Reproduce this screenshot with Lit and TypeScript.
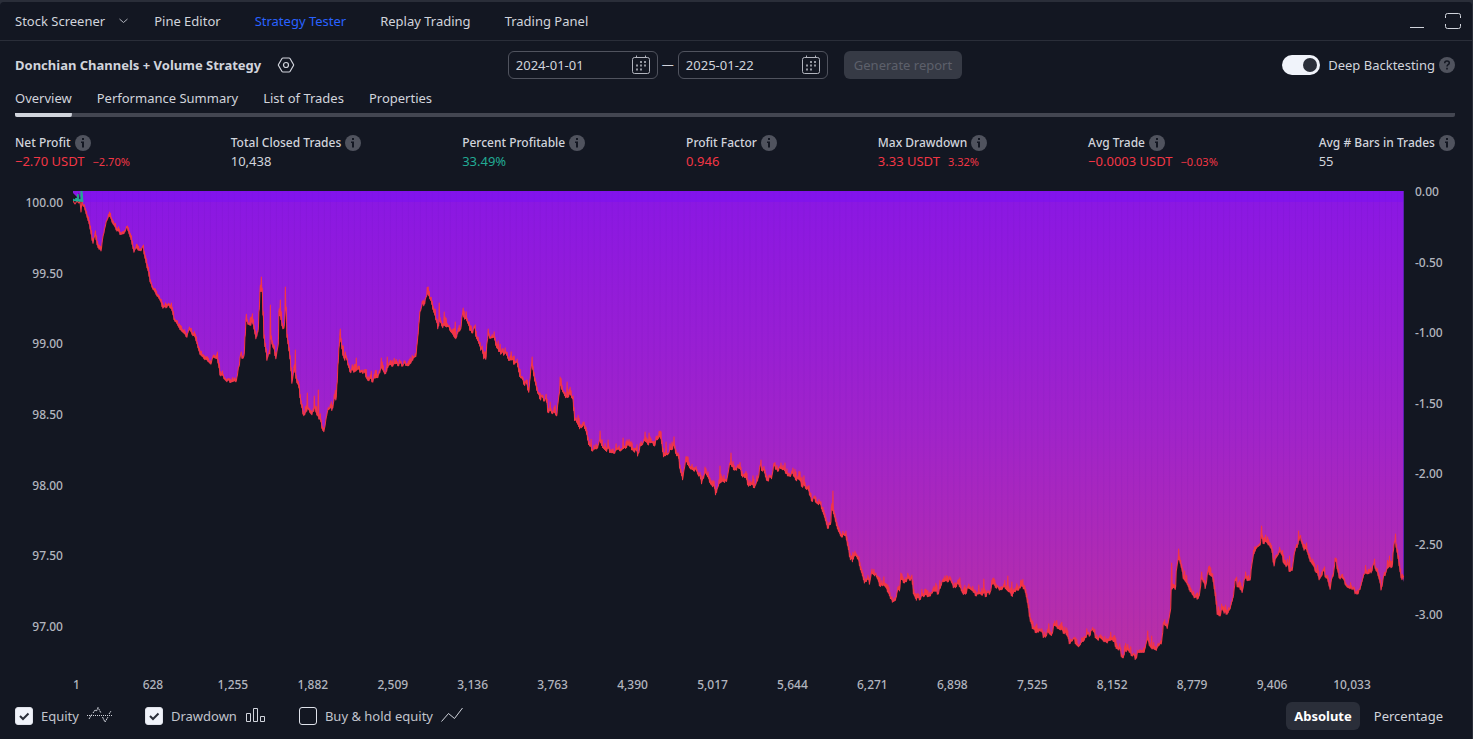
import { LitElement, html, svg, css } from "lit";
import { customElement, state } from "lit/decorators.js";

const LOWS: number[][] = [
  [83, 205], [86, 215], [89, 225], [92, 240], [93, 243], [95, 235], [97, 245], [101, 252], [103, 238], [106, 222],
  [109, 216], [112, 222], [116, 229], [120, 234], [124, 234], [127, 229], [131, 240], [134, 253], [136, 248], [141, 251],
  [143, 249], [146, 262], [150, 283], [154, 291], [160, 302], [164, 309], [168, 306], [171, 308], [174, 320], [180, 331],
  [187, 337], [189, 330], [195, 339], [200, 355], [211, 364], [213, 358], [217, 360], [220, 374], [228, 382], [236, 382],
  [239, 368], [241, 358], [244, 359], [246, 322], [248, 325], [252, 326], [254, 330], [256, 340], [258, 335], [260, 295],
  [262, 293], [264, 340], [267, 365], [270, 355], [271, 340], [274, 350], [276, 363], [278, 350], [279, 315], [281, 323],
  [284, 332], [286, 313], [287, 340], [290, 361], [292, 385], [294, 372], [297, 385], [299, 392], [303, 417], [307, 412],
  [312, 418], [315, 408], [320, 423], [324, 432], [328, 413], [332, 410], [336, 400], [337, 385], [339, 352], [340, 335],
  [343, 355], [346, 362], [349, 370], [354, 375], [358, 372], [362, 372], [367, 380], [373, 383], [378, 381], [381, 370],
  [385, 378], [390, 367], [398, 366], [410, 366], [416, 361], [418, 340], [420, 315], [424, 305], [428, 297], [431, 302],
  [434, 317], [438, 328], [440, 322], [443, 327], [450, 330], [456, 338], [461, 328], [463, 316], [466, 323], [470, 332],
  [475, 333], [480, 345], [484, 362], [486, 360], [487, 345], [489, 338], [493, 338], [498, 351], [501, 359], [505, 354],
  [510, 365], [517, 363], [520, 378], [526, 386], [529, 393], [531, 372], [532, 364], [535, 380], [538, 396], [543, 402],
  [546, 402], [548, 412], [553, 415], [557, 418], [559, 402], [561, 388], [565, 398], [569, 396], [573, 400], [575, 420],
  [580, 432], [584, 427], [588, 441], [590, 450], [597, 453], [600, 441], [604, 449], [608, 453], [615, 453], [622, 454],
  [627, 449], [633, 450], [638, 455], [641, 446], [645, 441], [650, 445], [655, 447], [660, 440], [662, 443], [664, 459],
  [669, 453], [674, 450], [679, 463], [683, 480], [686, 464], [691, 470], [696, 472], [700, 480], [702, 486], [705, 473],
  [709, 480], [713, 487], [716, 495], [720, 486], [724, 483], [727, 485], [730, 468], [735, 470], [738, 471], [742, 475],
  [749, 486], [755, 488], [758, 480], [761, 469], [764, 471], [767, 481], [772, 482], [774, 471], [780, 470], [786, 476],
  [793, 478], [799, 483], [803, 487], [807, 492], [812, 500], [816, 502], [822, 508], [825, 517], [828, 528], [831, 528],
  [832, 507], [835, 517], [838, 530], [841, 538], [844, 538], [846, 540], [849, 553], [853, 566], [856, 557], [859, 561],
  [862, 573], [865, 583], [870, 584], [872, 573], [876, 578], [879, 585], [885, 589], [890, 595], [893, 604], [895, 603],
  [897, 596], [900, 592], [901, 582], [905, 583], [912, 583], [914, 595], [917, 601], [920, 600], [925, 597], [930, 596],
  [935, 595], [941, 593], [943, 585], [950, 583], [954, 590], [957, 587], [962, 592], [964, 596], [968, 592], [973, 595],
  [978, 596], [984, 597], [990, 595], [994, 584], [1000, 591], [1005, 589], [1010, 594], [1014, 598], [1018, 591],
  [1025, 591], [1027, 600], [1030, 617], [1033, 632], [1037, 633], [1041, 634], [1044, 639], [1047, 635], [1051, 638],
  [1055, 629], [1060, 630], [1066, 634], [1070, 644], [1075, 642], [1079, 647], [1085, 640], [1090, 637], [1093, 634],
  [1100, 641], [1107, 647], [1109, 643], [1115, 643], [1118, 650], [1124, 659], [1126, 653], [1130, 656], [1136, 660],
  [1139, 656], [1145, 655], [1148, 641], [1151, 646], [1157, 652], [1162, 644], [1164, 628], [1168, 628], [1171, 611],
  [1172, 590], [1176, 590], [1177, 572], [1179, 561], [1181, 568], [1184, 580], [1188, 586], [1191, 592], [1195, 601],
  [1200, 597], [1202, 583], [1206, 588], [1209, 574], [1213, 577], [1216, 598], [1218, 615], [1221, 616], [1224, 611],
  [1227, 618], [1231, 612], [1234, 602], [1236, 585], [1239, 587], [1243, 597], [1245, 582], [1251, 580], [1254, 560],
  [1258, 550], [1261, 548], [1262, 536], [1264, 545], [1268, 546], [1272, 553], [1275, 565], [1281, 556], [1285, 563],
  [1290, 572], [1293, 573], [1295, 558], [1299, 545], [1301, 538], [1305, 550], [1308, 552], [1312, 564], [1317, 572],
  [1320, 581], [1324, 575], [1328, 580], [1331, 590], [1334, 578], [1336, 563], [1340, 577], [1347, 587], [1352, 590],
  [1355, 595], [1361, 592], [1365, 577], [1370, 577], [1375, 567], [1378, 575], [1382, 591], [1385, 580], [1388, 570],
  [1393, 566], [1396, 541], [1399, 560], [1402, 578], [1404, 582],
];

const SPIKES: Record<number, number> = {
  109: 212, 127: 226, 143: 245, 171: 303, 189: 327, 217: 352, 251: 317, 261: 277, 270: 305, 280: 300, 285: 287, 295: 350,
  307: 393, 314: 396, 318: 390, 340: 329, 356: 358, 381: 358, 387: 357, 428: 287, 439: 303, 444: 312, 455: 322, 463: 308,
  488: 329, 503: 349, 514: 356, 532: 357, 550: 402, 560: 377, 567: 382, 583: 422, 600: 431, 623: 438, 645: 432, 649: 433,
  660: 431, 666: 442, 672: 442, 688: 457, 705: 467, 720: 466, 731: 453, 761: 460, 785: 463, 793: 468, 802: 477, 833: 491,
  846: 531, 855: 551, 872: 569, 901: 573, 951: 578, 961: 585, 979: 585, 984: 579, 994: 578, 1008: 576, 1012: 582,
  1021: 580, 1037: 624, 1055: 621, 1092: 630, 1125: 646, 1148: 631, 1152: 636, 1172: 563, 1179: 549, 1185: 571,
  1202: 572, 1210: 566, 1222: 604, 1237: 577, 1246: 572, 1262: 526, 1268: 537, 1281: 550, 1290: 556, 1299: 531,
  1307: 543, 1322: 572, 1336: 558, 1365: 574, 1375: 559, 1390: 556, 1396: 534,
};

const X0 = 73, X1 = 1405, Y0 = 191, Y1 = 669;

function buildEquity() {
  let seed = 7;
  const rand = () => {
    seed = (seed * 16807) % 2147483647;
    return seed / 2147483647;
  };
  const line: string[] = [];
  const lows: string[] = [];
  let k = 0;
  let dip = 0;
  for (let x = LOWS[0][0]; x <= 1404; x++) {
    while (k < LOWS.length - 2 && LOWS[k + 1][0] <= x) k++;
    const [ax, ay] = LOWS[k];
    const [bx, by] = LOWS[k + 1];
    const slope = Math.abs((by - ay) / (bx - ax));
    if (x % 2 === 0) dip = rand() * (x < 240 ? 3 : 6);
    const low = ay + ((by - ay) * (x - ax)) / (bx - ax) - dip + 1;
    const swing = x < 240 ? 1 + rand() * 3 : slope > 3 ? 3 : 1 + rand() * rand() * 9;
    const top = SPIKES[x] ?? low - swing;
    line.push(`${x} ${low.toFixed(1)}`, `${x}.5 ${top.toFixed(1)}`);
    lows.push(`${x} ${low.toFixed(1)}`);
  }
  return {
    line: "M73 201L75 204L77 201L79 203L80 201L81 212L82 200L" + line.join("L"),
    area: `M${X0} ${Y0}V193L77 197L79 193L80 199L81 196L82 200L` + lows.join("L") + `L${X1} 582V${Y0}Z`,
  };
}
const EQUITY = buildEquity();

const info = html`<svg class="hint" viewBox="0 0 16 16" role="img" aria-label="Info">
  <circle cx="8" cy="8" r="8" fill="#50535e" />
  <path d="M7 3h2v2H7zM6 6.500h3v6H7V8H6z" fill="#131722" />
</svg>`;

const calendar = html`<svg class="cal" viewBox="0 0 20 20" fill="none" stroke="#b2b5be">
  <path d="M5.500 .5v2M14.500 .5v2" />
  <rect x="1.500" y="2.500" width="17" height="16" rx="2" />
  <path d="M9 7h2M13 7h2M5 10.500h2M9 10.500h2M13 10.500h2M5 14.500h2M9 14.500h2" stroke-width="2" stroke="#9598a1" />
</svg>`;

interface Stat { label: string; value: string; pct?: string; tone: string }
const STATS: Stat[] = [
  { label: "Net Profit", value: "−2.70 USDT", pct: "−2.70%", tone: "neg" },
  { label: "Total Closed Trades", value: "10,438", tone: "" },
  { label: "Percent Profitable", value: "33.49%", tone: "pos" },
  { label: "Profit Factor", value: "0.946", tone: "neg" },
  { label: "Max Drawdown", value: "3.33 USDT", pct: "3.32%", tone: "neg" },
  { label: "Avg Trade", value: "−0.0003 USDT", pct: "−0.03%", tone: "neg" },
  { label: "Avg # Bars in Trades", value: "55", tone: "" },
];

@customElement("equity-chart")
export class EquityChart extends LitElement {
  static styles = css`
    :host {
      display: grid;
      grid-template-columns: 73px minmax(0, 1fr) 68px;
      grid-template-rows: minmax(0, 1fr) auto;
      row-gap: 8px;
      font-size: 12px;
      line-height: 16px;
      font-weight: 500;
      color: #b2b5be;
    }
    .axis { display: flex; flex-direction: column; justify-content: space-between; }
    .left { align-items: flex-end; padding: 4px 10px 34px 0; }
    .right { margin-top: -7px; padding: 0 0 46px 11px; }
    svg { display: block; width: 100%; height: 100%; }
    .trades { grid-column: 1 / -1; display: flex; padding: 0 80px 0 73px; }
    .trades span { flex: 2 1 0; text-align: center; }
    .trades span:first-child { flex-grow: 1; text-align: left; }
  `;

  render() {
    return html`
      <div class="axis left">
        ${["100.00", "99.50", "99.00", "98.50", "98.00", "97.50", "97.00"].map((t) => html`<span>${t}</span>`)}
      </div>
      <svg viewBox="${X0} ${Y0} ${X1 - X0} ${Y1 - Y0}" preserveAspectRatio="none" role="img" aria-label="Equity and drawdown">
        ${svg`
          <defs>
            <linearGradient id="dd" gradientUnits="userSpaceOnUse" x1="0" y1="191" x2="0" y2="660">
              <stop offset="0" stop-color="#8a17e4" />
              <stop offset=".5" stop-color="#a023ca" />
              <stop offset="1" stop-color="#ba30a4" />
            </linearGradient>
            <pattern id="bars" patternUnits="userSpaceOnUse" width="6" height="700">
              <rect width="1" height="700" fill="#50109a" opacity=".08" />
            </pattern>
          </defs>
          <path d=${EQUITY.area} fill="url(#dd)" />
          <path d=${EQUITY.area} fill="url(#bars)" />
          <rect x="82" y="191" width="1323" height="11" fill="#7a10f4" opacity=".5" />
          <path d="M1404.5 191V578" stroke="#5a20b0" />
          <path d=${EQUITY.line} fill="none" stroke="#f23645" stroke-width="1.1" stroke-linejoin="round" />
          <path d="M73 201V199L75 200L76 198L77 199L78 194L79 200L81 199V191L82 191L83 202" fill="#22ab94" stroke="#22ab94" />
        `}
      </svg>
      <div class="axis right">
        ${["0.00", "-0.50", "-1.00", "-1.50", "-2.00", "-2.50", "-3.00"].map((t) => html`<span>${t}</span>`)}
      </div>
      <div class="trades">
        ${["1", "628", "1,255", "1,882", "2,509", "3,136", "3,763", "4,390", "5,017", "5,644", "6,271", "6,898", "7,525",
          "8,152", "8,779", "9,406", "10,033"].map((t) => html`<span>${t}</span>`)}
      </div>
    `;
  }
}

@customElement("app-root")
export class AppRoot extends LitElement {
  @state() private unit = "Absolute";

  static styles = css`
    :host {
      display: flex;
      flex-direction: column;
      box-sizing: border-box;
      height: 100vh;
      padding-top: 2px;
      background: #2a2e39;
      color: #d1d4dc;
      font: 13px/20px "Trebuchet MS", "Noto Sans", sans-serif;
    }
    * { box-sizing: border-box; }
    button { border: 0; padding: 0; background: none; color: inherit; font: inherit; cursor: pointer; }
    svg { flex: none; display: block; }
    .panel {
      flex: 1;
      min-height: 0;
      display: flex;
      flex-direction: column;
      background: #131722;
      border-right: 1px solid #2a2e39;
      border-radius: 4px 4px 0 0;
    }
    .header {
      display: flex;
      align-items: center;
      gap: 34px;
      height: 39px;
      padding: 0 11px 0 15px;
      border-bottom: 1px solid #2a2e39;
    }
    .menu { display: flex; align-items: center; gap: 14px; margin-right: -8px; }
    .chosen { color: #2962ff; }
    .window { display: flex; gap: 20px; margin-left: auto; }
    .toolbar {
      display: grid;
      grid-template-columns: 1fr auto 1fr;
      align-items: center;
      padding: 10px 17px 0 15px;
    }
    .title { display: flex; align-items: center; gap: 16px; }
    h1 { margin: 0; font-size: 13px; font-weight: 700; }
    .range { display: flex; align-items: center; gap: 4px; }
    .date {
      display: flex;
      align-items: center;
      width: 150px;
      height: 28px;
      padding: 0 6px 0 7px;
      border: 1px solid #50535e;
      border-radius: 6px;
    }
    .date input {
      flex: 1;
      min-width: 0;
      border: 0;
      padding: 0;
      outline: 0;
      background: none;
      color: inherit;
      font: inherit;
    }
    .cal { width: 20px; height: 20px; }
    .dash { font-size: 12px; }
    .generate {
      height: 28px;
      margin-left: 12px;
      padding: 0 10px;
      border-radius: 6px;
      background: #363a45;
      color: #5d606b;
    }
    .deep { display: flex; align-items: center; justify-content: flex-end; gap: 4px; }
    .deep label { display: flex; align-items: center; gap: 8px; }
    .switch {
      appearance: none;
      width: 38px;
      height: 20px;
      margin: 0;
      padding: 3px;
      border-radius: 10px;
      background: #f0f3fa;
      display: flex;
    }
    .switch::before { content: ""; width: 14px; height: 14px; border-radius: 7px; background: #2a2e39; }
    .switch:checked { justify-content: flex-end; }
    .hint { width: 16px; height: 16px; }
    .tabs {
      display: flex;
      gap: 25px;
      margin: 9px 17px 0 15px;
      background: linear-gradient(#434651, #434651) bottom / 100% 4px no-repeat;
      border-radius: 2px;
    }
    .tabs button { padding-bottom: 9px; }
    .tabs .current { background: linear-gradient(#d1d4dc, #d1d4dc) bottom / 100% 4px no-repeat; border-radius: 2px; }
    .stats {
      display: flex;
      justify-content: space-between;
      margin: 0;
      padding: 18px 17px 0 15px;
    }
    .stats dt { display: flex; align-items: center; gap: 4px; font-size: 12px; line-height: 16px; font-weight: 500; }
    .stats dd { margin: 0; display: flex; align-items: baseline; gap: 8px; line-height: 20px; }
    .stats small { font-size: 11px; }
    .neg { color: #f23645; }
    .pos { color: #22ab94; }
    equity-chart { flex: 1; min-height: 0; margin-top: 19px; }
    .footer { display: flex; align-items: center; gap: 32px; padding: 9px 21px 9px 15px; }
    .series { display: flex; align-items: center; gap: 8px; color: #c1c4cd; }
    .check { display: grid; place-items: center; }
    .check input, .check svg { grid-area: 1 / 1; }
    .check svg { pointer-events: none; visibility: hidden; }
    .check input {
      appearance: none;
      width: 18px;
      height: 18px;
      margin: 0;
      border: 1px solid #e0e3eb;
      border-radius: 3px;
    }
    .check input:checked { background: #f0f3fa; }
    .check input:checked + svg { visibility: visible; }
    .units { display: flex; gap: 6px; margin-left: auto; }
    .units button { height: 28px; padding: 0 8px; border-radius: 6px; }
    .units .current { background: #2a2e39; color: #fff; font-weight: 700; }
  `;

  private series(label: string, checked: boolean, icon: unknown) {
    return html`<label class="series">
      <span class="check">
        <input type="checkbox" .checked=${checked} />
        <svg width="18" height="18" viewBox="0 0 18 18" fill="none" stroke="#2a2e39" stroke-width="2"><path d="M5 9l3 3 5.500-5.500" /></svg>
      </span>
      <span>${label}</span>${icon}
    </label>`;
  }

  render() {
    return html`<div class="panel">
      <nav class="header">
        <button class="menu">
          Stock Screener
          <svg width="9" height="6" viewBox="0 0 9 6" fill="none" stroke="#b2b5be"><path d="M.5 1l4 3.500 4-3.500" /></svg>
        </button>
        <button>Pine Editor</button>
        <button class="chosen">Strategy Tester</button>
        <button>Replay Trading</button>
        <button>Trading Panel</button>
        <div class="window">
          <button aria-label="Minimize">
            <svg width="16" height="16" viewBox="0 0 16 16" stroke="#d1d4dc"><path d="M1 14.500h14" /></svg>
          </button>
          <button aria-label="Maximize">
            <svg width="16" height="16" viewBox="0 0 16 16" fill="none" stroke="#d1d4dc">
              <path d="M.5 5V2.500a2 2 0 0 1 2-2h11a2 2 0 0 1 2 2V5M.5 11v2.500a2 2 0 0 0 2 2h11a2 2 0 0 0 2-2V11" />
            </svg>
          </button>
        </div>
      </nav>

      <div class="toolbar">
        <div class="title">
          <h1>Donchian Channels + Volume Strategy</h1>
          <button aria-label="Settings">
            <svg width="18" height="16" viewBox="0 0 18 16" fill="none" stroke="#d1d4dc" stroke-width="1.200">
              <path d="M5 1.500Q5.300 1 6 1h6q.7 0 1 .5l3.500 6q.3.500 0 1l-3.500 6q-.3.500-1 .5H6q-.7 0-1-.5l-3.500-6q-.3-.5 0-1z" />
              <circle cx="9" cy="8" r="2.500" />
            </svg>
          </button>
        </div>
        <div class="range">
          <label class="date"><input type="text" aria-label="Start date" value="2024-01-01" />${calendar}</label>
          <span class="dash">—</span>
          <label class="date"><input type="text" aria-label="End date" value="2025-01-22" />${calendar}</label>
          <button class="generate" disabled>Generate report</button>
        </div>
        <div class="deep">
          <label><input class="switch" type="checkbox" role="switch" .checked=${true} />Deep Backtesting</label>
          <svg class="hint" viewBox="0 0 16 16" role="img" aria-label="Help">
            <circle cx="8" cy="8" r="8" fill="#50535e" />
            <path d="M5.700 6.200C5.700 4.800 6.600 4 8 4s2.300.8 2.300 2c0 1.600-2.300 1.700-2.300 3.400" fill="none" stroke="#131722" stroke-width="1.500" />
            <path d="M7.200 10.800h1.600v1.600H7.200z" fill="#131722" />
          </svg>
        </div>
      </div>

      <nav class="tabs">
        <button class="current">Overview</button>
        <button>Performance Summary</button>
        <button>List of Trades</button>
        <button>Properties</button>
      </nav>

      <dl class="stats">
        ${STATS.map((s) => html`<div>
          <dt>${s.label}${info}</dt>
          <dd class=${s.tone}>${s.value}${s.pct ? html`<small>${s.pct}</small>` : ""}</dd>
        </div>`)}
      </dl>

      <equity-chart></equity-chart>

      <div class="footer">
        ${this.series("Equity", true, html`<svg width="26" height="18" viewBox="0 0 26 18" fill="none" stroke="#d1d4dc">
          <path d="M0 8.500h26" stroke-dasharray="1 1" />
          <path d="M2 12l3-5M6 6l2-3 1.500 1L11 .5 14 6" stroke-dasharray="2 .6" />
          <path d="M15.500 10l2.500 5 3-5M22 7l2-3" stroke-dasharray="2 .6" />
        </svg>`)}
        ${this.series("Drawdown", true, html`<svg width="22" height="18" viewBox="0 0 22 18" fill="none" stroke="#d1d4dc">
          <path d="M1.500 6.500h4v8h-4zM8.500 1.500h4v13h-4zM15.500 9.500h4v5h-4z" />
        </svg>`)}
        ${this.series("Buy & hold equity", false, html`<svg width="22" height="18" viewBox="0 0 22 18" fill="none" stroke="#d1d4dc">
          <path d="M.5 14.500l7-8 6 5L21.500 1" />
        </svg>`)}
        <div class="units">
          ${["Absolute", "Percentage"].map((u) => html`<button
            class=${u === this.unit ? "current" : ""}
            @click=${() => (this.unit = u)}
          >${u}</button>`)}
        </div>
      </div>
    </div>`;
  }
}
